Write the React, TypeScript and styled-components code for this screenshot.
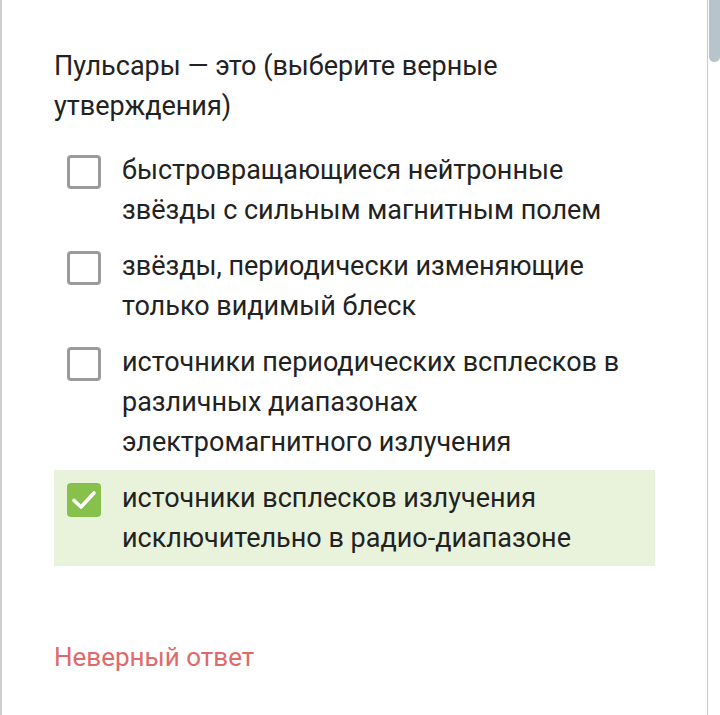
import React from "react";
import styled, { createGlobalStyle } from "styled-components";

const Global = createGlobalStyle`
  html, body { margin: 0; padding: 0; background: #fff; }
  body { font-family: Roboto, "Noto Sans", sans-serif; }
`;

const Frame = styled.div`
  position: relative;
  width: 720px;
  height: 715px;
  box-sizing: border-box;
  border-left: 2px solid #cfcfcf;
  overflow: hidden;
  display: flex;
`;

const Content = styled.div`
  flex: 1;
  padding: 46px 0 0 52px;
  box-sizing: border-box;
`;

const Track = styled.div`
  width: 12px;
  border-left: 1px solid #c8c8c8;
  position: relative;
`;

const Thumb = styled.div`
  position: absolute;
  top: 0;
  left: 1px;
  right: 0;
  height: 62px;
  background: #b8c4cc;
  border-radius: 0 0 5px 5px;
`;

const Question = styled.div`
  font-size: 27px;
  line-height: 40px;
  color: #222;
  width: 520px;
  margin-bottom: 16px;
`;

const Options = styled.div`
  display: flex;
  flex-direction: column;
  width: 601px;
`;

const Option = styled.div<{ $checked?: boolean }>`
  display: flex;
  align-items: flex-start;
  padding: 8px 0 8px 13px;
  background: ${(p) => (p.$checked ? "#e9f3dc" : "transparent")};
`;

const Box = styled.div<{ $checked?: boolean }>`
  flex: none;
  width: 34px;
  height: 34px;
  box-sizing: border-box;
  margin-top: 5px;
  border-radius: 4px;
  border: ${(p) => (p.$checked ? "none" : "3px solid #9b9b9b")};
  background: ${(p) => (p.$checked ? "#87c04a" : "#fff")};
  display: flex;
  align-items: center;
  justify-content: center;
`;

const Label = styled.div`
  margin-left: 21px;
  font-size: 27px;
  line-height: 40px;
  color: #222;
  white-space: nowrap;
`;

const Result = styled.div`
  margin-top: 71px;
  font-size: 26px;
  line-height: 40px;
  color: #e06a6a;
`;

const opts = [
  { t: ["быстровращающиеся нейтронные", "звёзды с сильным магнитным полем"], c: false },
  { t: ["звёзды, периодически изменяющие", "только видимый блеск"], c: false },
  { t: ["источники периодических всплесков в", "различных диапазонах", "электромагнитного излучения"], c: false },
  { t: ["источники всплесков излучения", "исключительно в радио-диапазоне"], c: true },
];

export default function App() {
  return (
    <>
      <Global />
      <Frame>
        <Content>
          <Question>
            Пульсары — это (выберите верные
            <br />
            утверждения)
          </Question>
          <Options>
            {opts.map((o, i) => (
              <Option key={i} $checked={o.c}>
                <Box $checked={o.c}>
                  {o.c && (
                    <svg width="26" height="22" viewBox="0 0 26 22">
                      <path d="M3 11.5 L10 18 L23 4" fill="none" stroke="#fff" strokeWidth="3.6" strokeLinecap="round" strokeLinejoin="round" />
                    </svg>
                  )}
                </Box>
                <Label>
                  {o.t.map((l, j) => (
                    <React.Fragment key={j}>
                      {j > 0 && <br />}
                      {l}
                    </React.Fragment>
                  ))}
                </Label>
              </Option>
            ))}
          </Options>
          <Result>Неверный ответ</Result>
        </Content>
        <Track>
          <Thumb />
        </Track>
      </Frame>
    </>
  );
}
